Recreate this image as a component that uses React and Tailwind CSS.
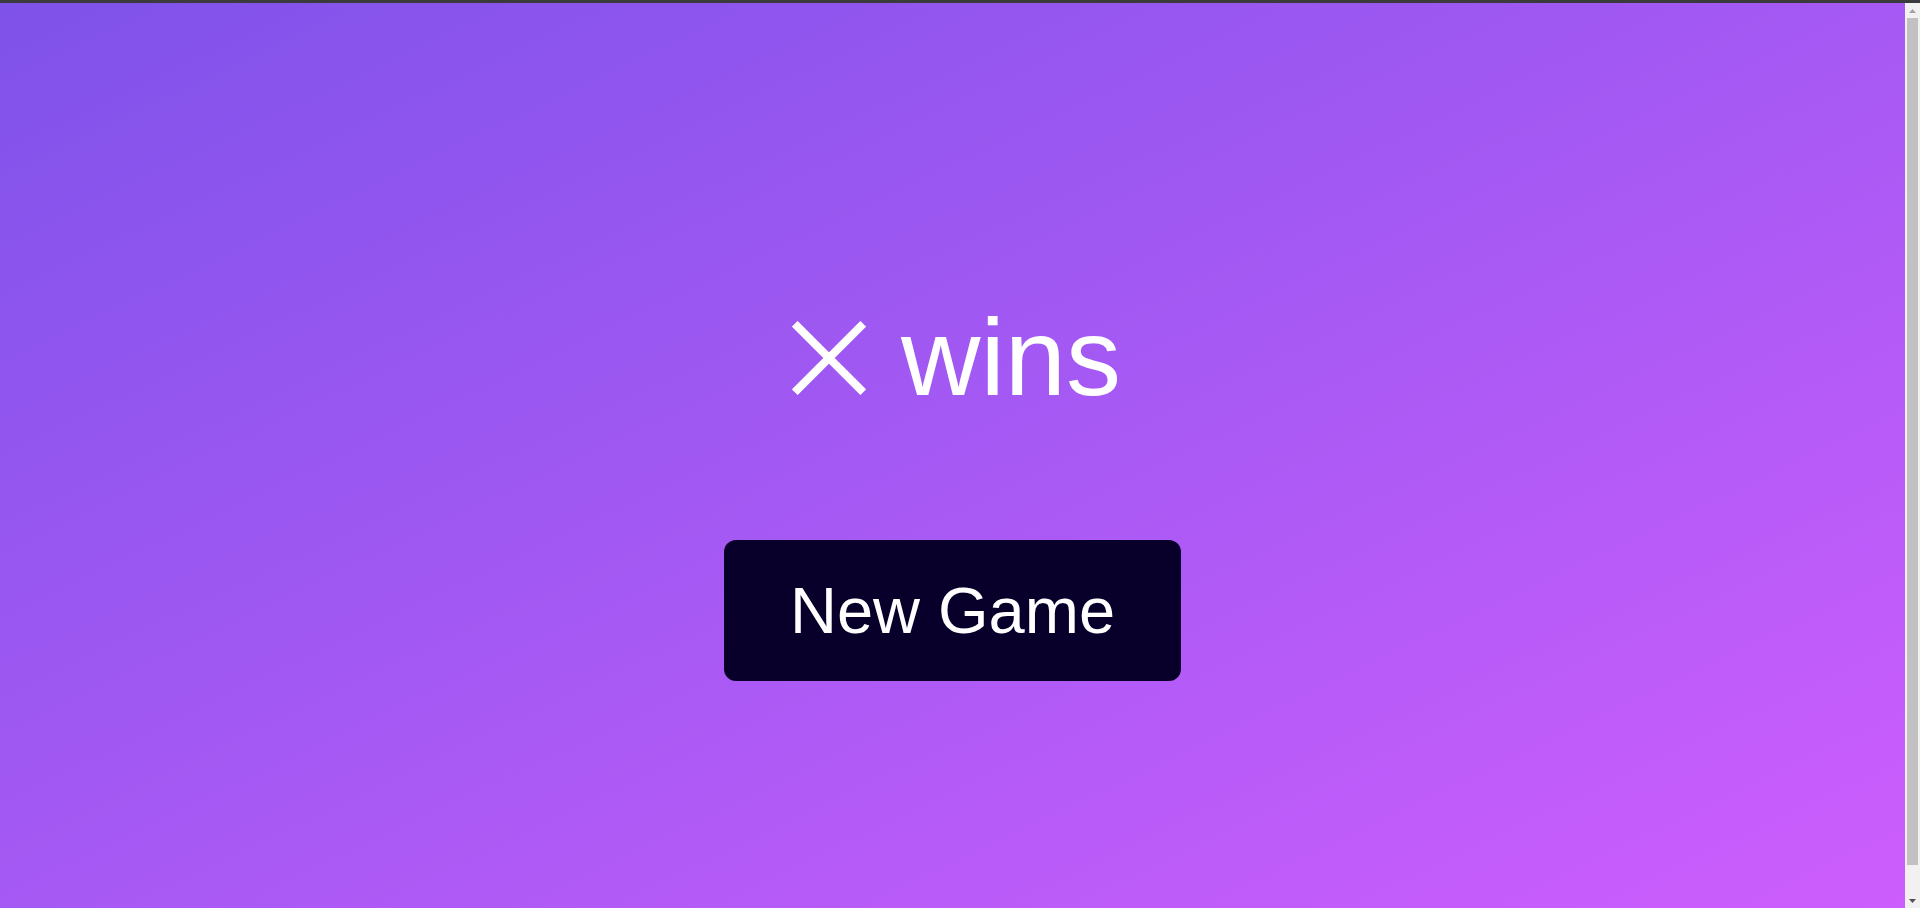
export default function App() {
  return (
    <div className="flex h-screen flex-col bg-[#3b3b3b] font-['Liberation_Sans','DejaVu_Sans',sans-serif] text-white">
      <div className="h-[3px] shrink-0" />
      <div className="flex min-h-0 flex-1">
        <main className="flex flex-1 flex-col items-center overflow-hidden bg-linear-to-br from-[#7f52ea] to-[#cd5dfd] pt-[290px]">
          <h1 className="text-[110px] leading-[128px] font-normal whitespace-nowrap">
            <svg
              viewBox="0 0 74 74"
              className="ml-[8px] mr-[35px] inline-block h-[74px] w-[74px] align-baseline"
              fill="none"
              stroke="currentColor"
              strokeWidth="8"
            >
              <line x1="2.8" y1="2.8" x2="71.2" y2="71.2" />
              <line x1="71.2" y1="2.8" x2="2.8" y2="71.2" />
            </svg>
            wins
          </h1>
          <button className="mt-[119px] flex h-[141px] w-[457px] items-center justify-center rounded-xl bg-[#08002a] text-[65px] leading-none text-white">
            New Game
          </button>
        </main>

        {/* scrollbar */}
        <div className="flex w-[15px] shrink-0 flex-col bg-[#f1f1f1]">
          <div className="flex h-[15px] items-center justify-center">
            <svg width="7" height="4" viewBox="0 0 7 4" fill="#a3a3a3">
              <polygon points="3.5,0 7,4 0,4" />
            </svg>
          </div>
          <div className="flex-1">
            <div className="mx-[2px] h-[847px] bg-[#c1c1c1]" />
          </div>
          <div className="flex h-[15px] items-center justify-center">
            <svg width="7" height="4" viewBox="0 0 7 4" fill="#505050">
              <polygon points="0,0 7,0 3.5,4" />
            </svg>
          </div>
        </div>
      </div>
    </div>
  )
}
